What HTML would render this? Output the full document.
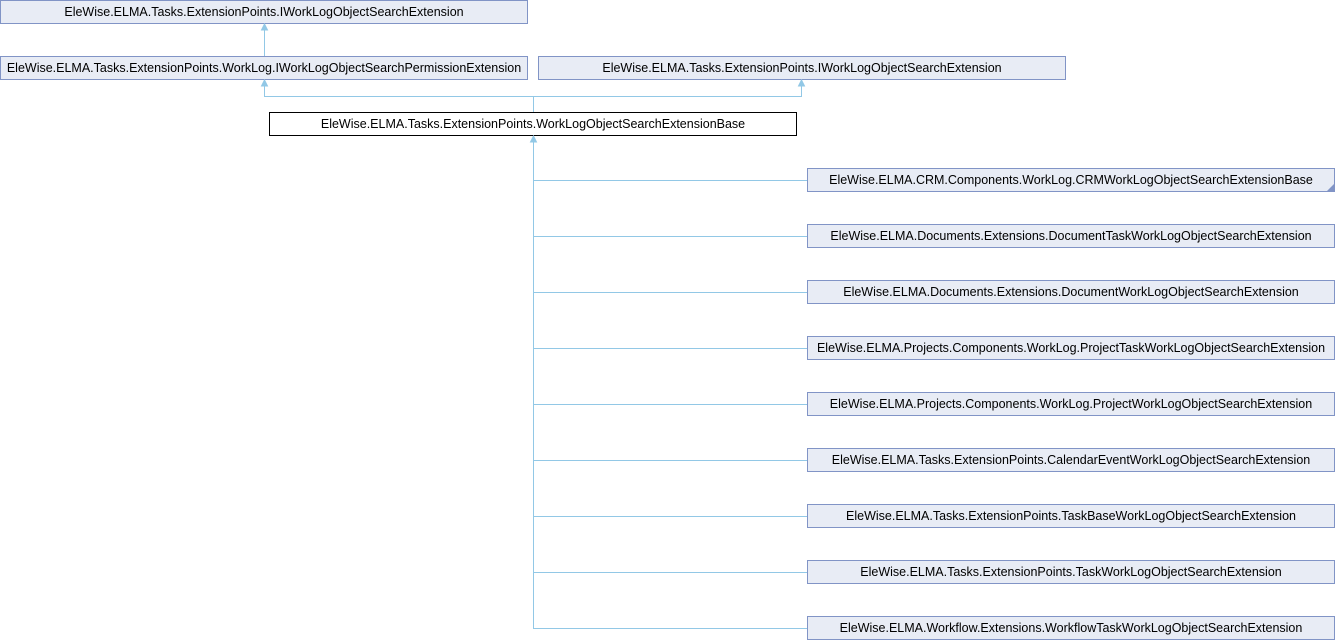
<!DOCTYPE html>
<html><head><meta charset="utf-8"><style>
html,body{margin:0;padding:0;background:#fff;}
svg{display:block;}
text{font-family:"Liberation Sans",Arial,sans-serif;font-size:12.5px;fill:#000;}
.b{fill:#e8ecf5;stroke:#8194c6;stroke-width:1;}
.w{fill:#fff;stroke:#000;stroke-width:1;}
.l{stroke:#92c8e6;stroke-width:1;fill:none;}
.a{fill:#92c8e6;stroke:#92c8e6;}
</style></head><body>
<svg width="1335" height="640" viewBox="0 0 1335 640">
<rect class="b" x="0.5" y="0.5" width="527" height="23"/>
<text x="264" y="16" text-anchor="middle">EleWise.ELMA.Tasks.ExtensionPoints.IWorkLogObjectSearchExtension</text>
<rect class="b" x="0.5" y="56.5" width="527" height="23"/>
<text x="264" y="72" text-anchor="middle">EleWise.ELMA.Tasks.ExtensionPoints.WorkLog.IWorkLogObjectSearchPermissionExtension</text>
<rect class="b" x="538.5" y="56.5" width="527" height="23"/>
<text x="802" y="72" text-anchor="middle">EleWise.ELMA.Tasks.ExtensionPoints.IWorkLogObjectSearchExtension</text>
<rect class="w" x="269.5" y="112.5" width="527" height="23"/>
<text x="533" y="128" text-anchor="middle">EleWise.ELMA.Tasks.ExtensionPoints.WorkLogObjectSearchExtensionBase</text>
<path class="l" d="M264.5 56V28"/>
<path class="a" d="M264.5 24l-3 6h6z"/>
<path class="l" d="M533.5 112V96.5H264.5V84M264.5 96.5H801.5V84"/>
<path class="a" d="M264.5 80l-3 6h6z"/>
<path class="a" d="M801.5 80l-3 6h6z"/>
<path class="l" d="M533.5 140V628.5"/>
<path class="a" d="M533.5 136l-3 6h6z"/>
<path class="l" d="M533 180.5H807M533 236.5H807M533 292.5H807M533 348.5H807M533 404.5H807M533 460.5H807M533 516.5H807M533 572.5H807M533 628.5H807"/>
<g>
<rect class="b" x="807.5" y="168.5" width="527" height="23"/>
<path d="M1334 184v7h-7z" fill="#8194c6"/>
<text x="1071" y="184" text-anchor="middle">EleWise.ELMA.CRM.Components.WorkLog.CRMWorkLogObjectSearchExtensionBase</text>
<rect class="b" x="807.5" y="224.5" width="527" height="23"/>
<text x="1071" y="240" text-anchor="middle">EleWise.ELMA.Documents.Extensions.DocumentTaskWorkLogObjectSearchExtension</text>
<rect class="b" x="807.5" y="280.5" width="527" height="23"/>
<text x="1071" y="296" text-anchor="middle">EleWise.ELMA.Documents.Extensions.DocumentWorkLogObjectSearchExtension</text>
<rect class="b" x="807.5" y="336.5" width="527" height="23"/>
<text x="1071" y="352" text-anchor="middle">EleWise.ELMA.Projects.Components.WorkLog.ProjectTaskWorkLogObjectSearchExtension</text>
<rect class="b" x="807.5" y="392.5" width="527" height="23"/>
<text x="1071" y="408" text-anchor="middle">EleWise.ELMA.Projects.Components.WorkLog.ProjectWorkLogObjectSearchExtension</text>
<rect class="b" x="807.5" y="448.5" width="527" height="23"/>
<text x="1071" y="464" text-anchor="middle">EleWise.ELMA.Tasks.ExtensionPoints.CalendarEventWorkLogObjectSearchExtension</text>
<rect class="b" x="807.5" y="504.5" width="527" height="23"/>
<text x="1071" y="520" text-anchor="middle">EleWise.ELMA.Tasks.ExtensionPoints.TaskBaseWorkLogObjectSearchExtension</text>
<rect class="b" x="807.5" y="560.5" width="527" height="23"/>
<text x="1071" y="576" text-anchor="middle">EleWise.ELMA.Tasks.ExtensionPoints.TaskWorkLogObjectSearchExtension</text>
<rect class="b" x="807.5" y="616.5" width="527" height="23"/>
<text x="1071" y="632" text-anchor="middle">EleWise.ELMA.Workflow.Extensions.WorkflowTaskWorkLogObjectSearchExtension</text>
</g>
</svg>
</body></html>
